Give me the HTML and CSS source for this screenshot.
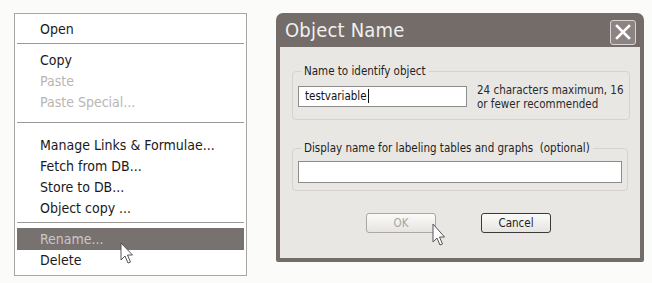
FILE: index.html
```html
<!DOCTYPE html>
<html lang="en">
<head>
  <meta charset="UTF-8" />
  <title>Object Name</title>
  <link rel="stylesheet" href="styles.css">
</head>
<body>
  <div class="page">
    <!-- context menu -->
    <div class="menu">
      <div class="item">Open</div>
      <div class="sep"></div>
      <div class="item">Copy</div>
      <div class="item off">Paste</div>
      <div class="item off">Paste Special...</div>
      <div class="sep sep-wide"></div>
      <div class="item">Manage Links &amp; Formulae...</div>
      <div class="item">Fetch from DB...</div>
      <div class="item">Store to DB...</div>
      <div class="item">Object copy ...</div>
      <div class="sep sep-last"></div>
      <div class="item active">Rename...</div>
      <div class="item">Delete</div>

      <svg class="cursor cursor-menu" width="14" height="24" viewBox="0 0 14 24">
        <path d="M1 1 L1 18 L5 14 L8 21 L10.5 20 L7.5 13 L12.5 13 Z" fill="#fff" stroke="#555" stroke-width="1"/>
      </svg>
    </div>

    <!-- dialog -->
    <div class="dialog">
      <div class="titlebar">
        <span class="title">Object Name</span>
        <div class="close">
          <svg width="16" height="16" viewBox="0 0 16 16">
            <path d="M2 2 L14 14 M14 2 L2 14" stroke="#fff" stroke-width="2.6" stroke-linecap="square"/>
          </svg>
        </div>
      </div>

      <div class="dialog-body">
        <fieldset class="group">
          <legend>Name to identify object</legend>
          <div class="name-row">
            <div class="field field-name">testvariable<span class="caret"></span></div>
            <div class="hint">24 characters maximum, 16<br>or fewer recommended</div>
          </div>
        </fieldset>

        <fieldset class="group group-display">
          <legend>Display name for labeling tables and graphs&nbsp; (optional)</legend>
          <div class="field field-wide"></div>
        </fieldset>

        <div class="buttons">
          <div class="btn btn-off">OK</div>
          <div class="btn">Cancel</div>
        </div>

        <svg class="cursor cursor-ok" width="14" height="26" viewBox="0 0 14 26">
          <path d="M1 1 L1 19 L5 15 L8 22 L10.5 21 L7.5 14 L12.5 14 Z" fill="#fff" stroke="#555" stroke-width="1"/>
        </svg>
      </div>
    </div>
  </div>
</body>
</html>
```

FILE: styles.css
```css
* {
  box-sizing: border-box;
}

body {
  margin: 0;
  background-color: #fbfbfa;
  font-family: "DejaVu Sans Condensed", "DejaVu Sans", sans-serif;
  color: #222;
}

.page {
  display: flex;
  align-items: flex-start;
  padding: 13px 0 0 14px;
}

/* context menu */
.menu {
  position: relative;
  width: 233px;
  height: 263px;
  background: #fff;
  border: 1px solid #a9a5a3;
  padding: 5px 2px 0;
}

.item {
  height: 21px;
  line-height: 21px;
  padding-left: 23px;
  font-size: 14px;
  color: #1a1a1a;
}

.item.off {
  color: #b9b5b3;
}

.item.active {
  background: #77716f;
  color: #cbc7c5;
  height: 22px;
  line-height: 22px;
}

.sep {
  height: 1px;
  background: #9c9896;
  margin: 3px 0 6px;
}

.sep-wide {
  margin: 9px 0 12px;
}

.sep-last {
  margin: 3px 0 5px;
}

.cursor {
  position: absolute;
}

.cursor-menu {
  left: 105px;
  top: 228px;
}

/* dialog */
.dialog {
  width: 368px;
  height: 249px;
  margin-left: 29px;
  background: #736c69;
  border-radius: 7px 7px 2px 2px;
  padding: 0 4px 4px;
  display: flex;
  flex-direction: column;
}

.titlebar {
  height: 34px;
  display: flex;
  align-items: center;
  justify-content: space-between;
  padding: 0 4px 0 5px;
}

.title {
  font-size: 20px;
  color: #f1f0ef;
  letter-spacing: 0.2px;
}

.close {
  width: 26px;
  height: 25px;
  margin-top: 4px;
  border: 1px solid #d8d4d2;
  border-radius: 3px;
  background: #8b8482;
  display: flex;
  align-items: center;
  justify-content: center;
}

.dialog-body {
  position: relative;
  flex: 1;
  background: #e9e7e4;
  padding: 17px 12px 0;
  font-size: 11.5px;
}

.group {
  margin: 0;
  border: 1px solid #d5d2cf;
  border-radius: 4px;
  padding: 8px 5px 8px;
}

.group legend {
  padding: 0 3px;
  margin-left: 3px;
  color: #1e1e1e;
}

.name-row {
  display: flex;
  align-items: flex-start;
  gap: 10px;
}

.field {
  height: 21px;
  background: #fff;
  border: 1px solid #8e8c8a;
  font-size: 11.5px;
  line-height: 19px;
  padding-left: 6px;
  color: #111;
  flex-shrink: 0;
}

.field-name {
  width: 169px;
}

.caret {
  display: inline-block;
  width: 1px;
  height: 14px;
  background: #111;
  vertical-align: -3px;
  margin-left: 1px;
}

.hint {
  white-space: nowrap;
  line-height: 14px;
  margin-top: -3px;
  color: #2a2a2a;
}

.group-display {
  margin-top: 21px;
  padding-top: 6px;
  padding-bottom: 7px;
}

.field-wide {
  width: 100%;
  height: 22px;
}

.buttons {
  display: flex;
  justify-content: center;
  gap: 45px;
  margin-top: 22px;
  padding-right: 3px;
}

.btn {
  width: 70px;
  height: 20px;
  border: 1px solid #3a3a3a;
  border-radius: 3px;
  background: linear-gradient(#fbfbfa, #e6e4e1);
  text-align: center;
  line-height: 18px;
  color: #1e1e1e;
}

.btn-off {
  border-color: #aaa7a4;
  color: #a8a5a2;
}

.cursor-ok {
  left: 152px;
  top: 176px;
}
```
